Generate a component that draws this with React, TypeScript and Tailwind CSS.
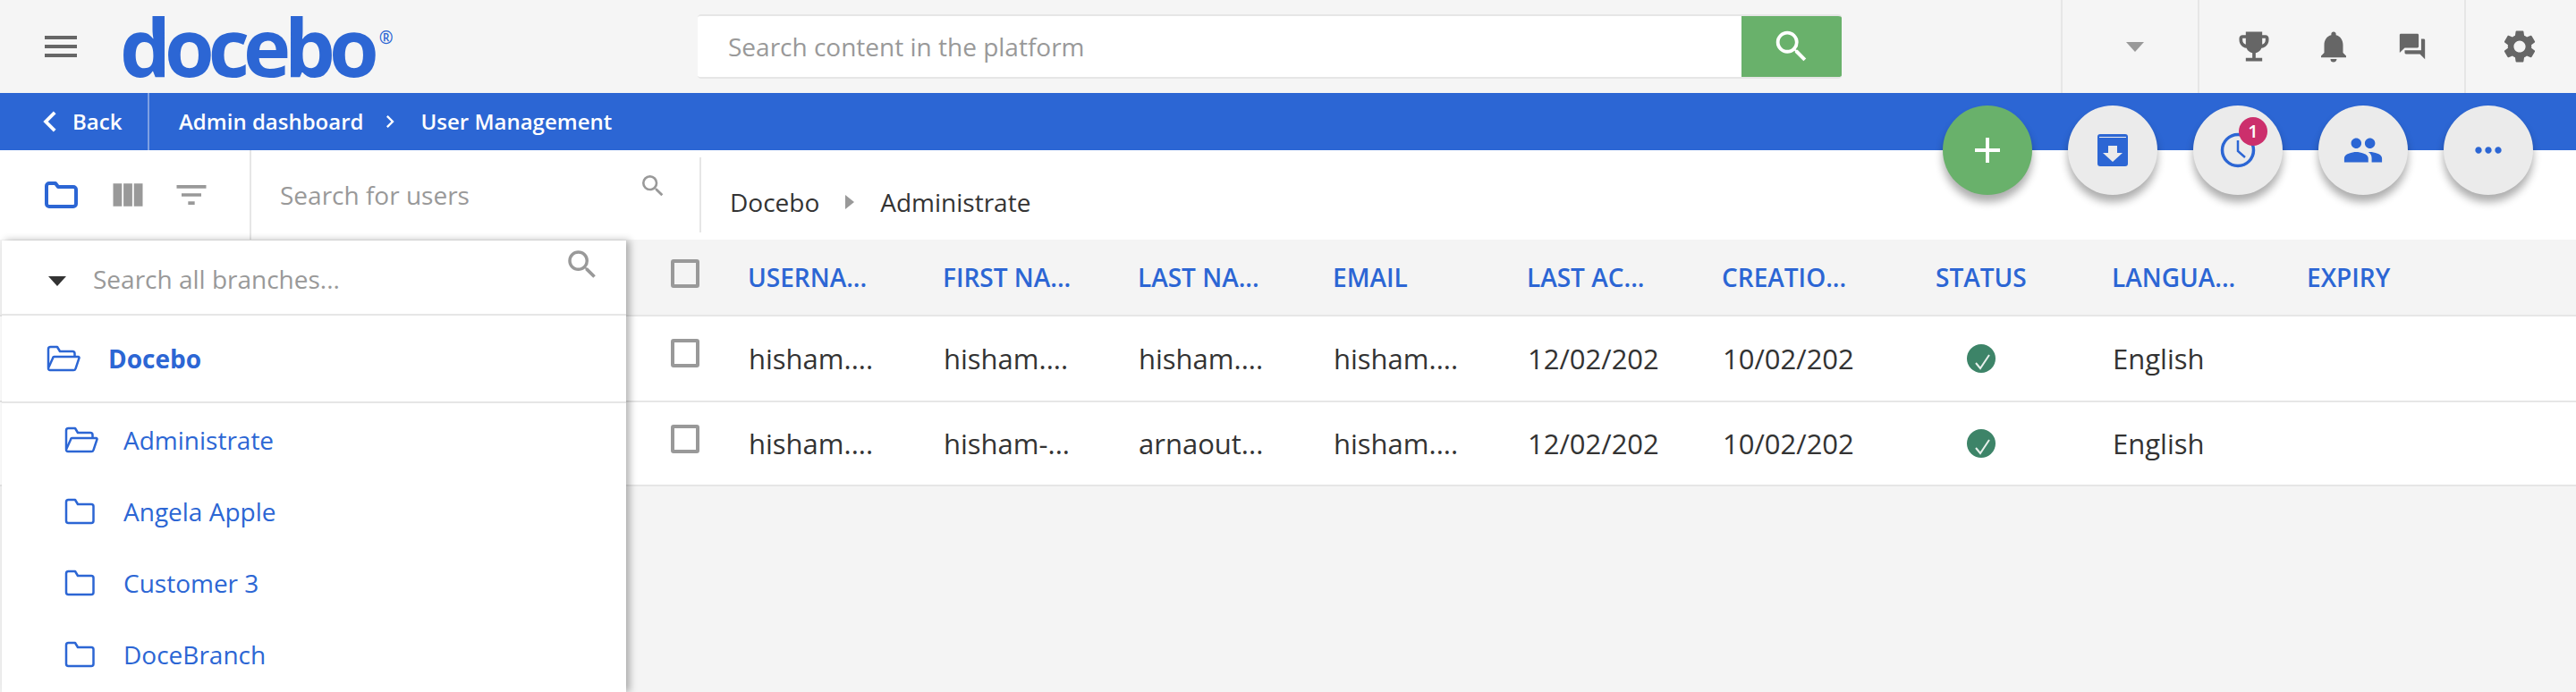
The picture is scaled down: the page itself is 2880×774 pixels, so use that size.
import {
  MdMenu,
  MdSearch,
  MdChevronLeft,
  MdChevronRight,
  MdViewColumn,
  MdFilterList,
  MdEmojiEvents,
  MdNotifications,
  MdForum,
  MdSettings,
  MdPeople,
  MdMoreHoriz,
  MdAdd,
} from "react-icons/md";

const columns = ["USERNA...", "FIRST NA...", "LAST NA...", "EMAIL", "LAST AC...", "CREATIO...", "STATUS", "LANGUA...", "EXPIRY"];

const rows = [
  ["hisham....", "hisham....", "hisham....", "hisham...."],
  ["hisham....", "hisham-...", "arnaout...", "hisham...."],
];

const gridCols = "grid grid-cols-[218px_218px_218px_217px_218px_239px_197px_218px_218px] items-center";

function FolderClosed({ className }: { className?: string }) {
  return (
    <svg viewBox="0 0 34 30" fill="none" stroke="currentColor" strokeWidth="2.5" strokeLinejoin="round" className={className}>
      <path d="M2 4.5a2.5 2.5 0 0 1 2.5-2.5H12l3 5h15a2.5 2.5 0 0 1 2.5 2.5v16a2.5 2.5 0 0 1-2.5 2.5H4.5A2.5 2.5 0 0 1 2 25.5z" />
    </svg>
  );
}

function FolderOpen({ className }: { className?: string }) {
  return (
    <svg viewBox="0 0 38 30" fill="none" stroke="currentColor" strokeWidth="2.5" strokeLinejoin="round" className={className}>
      <path d="M2 25V4.5A2.5 2.5 0 0 1 4.5 2H12l3 5h14a2.5 2.5 0 0 1 2.5 2.5V13" />
      <path d="M9 13h26.5a1 1 0 0 1 1 1.3l-4 12a2.5 2.5 0 0 1-2.4 1.7H4a2 2 0 0 1-1.9-2.6l5-11a1.5 1.5 0 0 1 1.9-1.4z" />
    </svg>
  );
}

function RoundButton({ children, green }: { children: React.ReactNode; green?: boolean }) {
  return (
    <div
      className={`relative flex h-[100px] w-[100px] items-center justify-center rounded-full shadow-[0_8px_10px_rgba(0,0,0,0.32)] ${
        green ? "bg-[#69b16b]" : "bg-[#ebebeb]"
      }`}
    >
      {children}
    </div>
  );
}

export default function App() {
  return (
    <div className="relative flex h-[774px] w-[2880px] flex-col overflow-hidden bg-[#f4f4f4] font-['Open_Sans',sans-serif] text-[31px] text-[#333333]">
      {/* top bar */}
      <header className="flex h-[104px] shrink-0 items-center bg-[#f5f5f5]">
        <MdMenu className="ml-[44px] h-[48px] w-[48px] text-[#666666]" />
        <div className="ml-[42px] flex h-full w-[306px] items-start text-[#2c66d4]">
          <span className="mt-[1px] text-[90px] leading-[100px] font-bold tracking-[-7px]">docebo</span>
          <span className="mt-[33px] ml-[7px] text-[19px] leading-none font-semibold">®</span>
        </div>
        <div className="ml-[340px] flex h-[72px] w-[1279px] overflow-hidden rounded-[4px] border-t-2 border-b-2 border-[#e6e6e6]">
          <div className="flex flex-1 items-center bg-white pl-[34px] text-[28px] text-[#999999]">Search content in the platform</div>
          <div className="my-[-2px] flex w-[112px] items-center justify-center bg-[#69b16b]">
            <MdSearch className="h-[46px] w-[46px] text-white" />
          </div>
        </div>
        <div className="ml-[245px] flex h-full w-[153px] items-center justify-center border-l-2 border-[#e6e6e6] pl-[10px]">
          <div className="h-0 w-0 border-x-[10px] border-t-[11px] border-x-transparent border-t-[#999999]" />
        </div>
        <div className="flex h-full w-[298px] items-center border-l-2 border-[#e6e6e6] pl-[39px] text-[#666666]">
          <MdEmojiEvents className="h-[44px] w-[44px]" />
          <MdNotifications className="ml-[46px] h-[42px] w-[42px]" />
          <MdForum className="ml-[50px] h-[34px] w-[34px]" />
        </div>
        <div className="flex h-full flex-1 items-center border-l-2 border-[#e6e6e6] pl-[38px] text-[#666666]">
          <MdSettings className="h-[44px] w-[44px]" />
        </div>
      </header>

      {/* blue navigation bar */}
      <nav className="flex h-[64px] shrink-0 items-center bg-[#2c66d4] text-[24px] font-semibold text-white">
        <div className="flex h-full w-[167px] items-center border-r-2 border-[#7ea0e2] pl-[33px]">
          <MdChevronLeft className="h-[46px] w-[46px]" />
          <span className="ml-[2px]">Back</span>
        </div>
        <span className="ml-[33px]">Admin dashboard</span>
        <MdChevronRight className="mr-[20px] ml-[16px] h-[28px] w-[28px]" />
        <span>User Management</span>
      </nav>

      {/* toolbar */}
      <div className="flex h-[100px] shrink-0 items-center bg-white">
        <div className="flex h-full w-[281px] items-center border-r-2 border-[#e6e6e6] pl-[50px]">
          <svg viewBox="0 0 37 30" className="h-[30px] w-[37px] text-[#2c66d4]" fill="none" stroke="currentColor" strokeWidth="4" strokeLinejoin="round">
            <path d="M2 5a3 3 0 0 1 3-3h7l3 4h17a3 3 0 0 1 3 3v16a3 3 0 0 1-3 3H5a3 3 0 0 1-3-3z" />
          </svg>
          <MdViewColumn className="ml-[34px] h-[44px] w-[44px] text-[#999999]" />
          <MdFilterList className="ml-[27px] h-[44px] w-[44px] text-[#999999]" />
        </div>
        <div className="flex w-[501px] items-center pr-[36px] pl-[32px] text-[28px] text-[#999999]">
          <span className="flex-1">Search for users</span>
          <MdSearch className="mt-[-20px] h-[32px] w-[32px]" />
        </div>
        <div className="flex h-[84px] items-center border-l-2 border-[#e6e6e6] pt-[16px] pl-[32px] text-[28px]">
          <span>Docebo</span>
          <div className="mx-[29px] h-0 w-0 border-y-[8px] border-l-[10px] border-y-transparent border-l-[#999999]" />
          <span>Administrate</span>
        </div>
      </div>

      {/* users table */}
      <div className={`${gridCols} h-[84px] shrink-0 pl-[836px] text-[28px] font-semibold text-[#2c66d4]`}>
        {columns.map((col) => (
          <span key={col}>{col}</span>
        ))}
      </div>
      {rows.map((row, i) => (
        <div key={i} className={`${gridCols} h-[96px] shrink-0 border-t-2 border-[#e6e6e6] bg-white pl-[837px] ${i === 1 ? "border-b-2" : ""}`}>
          {row.map((cell, j) => (
            <span key={j}>{cell}</span>
          ))}
          <span>12/02/202</span>
          <span>10/02/202</span>
          <span className="flex h-[32px] w-[32px] translate-x-[34px] items-center justify-center rounded-full bg-[#3d8468]">
            <svg viewBox="0 0 32 32" className="h-[32px] w-[32px]" fill="none" stroke="#e8f0ec" strokeWidth="2">
              <path d="M10 21l5 6 10-15" />
            </svg>
          </span>
          <span>English</span>
          <span />
        </div>
      ))}

      {/* table checkboxes */}
      {[290, 379, 475].map((top) => (
        <div key={top} style={{ top }} className="absolute left-[750px] h-[32px] w-[32px] rounded-[3px] border-4 border-[#999999]" />
      ))}

      {/* branch panel */}
      <aside className="absolute top-[269px] bottom-0 left-[2px] w-[698px] bg-white shadow-[4px_0_8px_rgba(0,0,0,0.3)]">
        <div className="flex h-[84px] border-b-2 border-[#e6e6e6] pr-[28px] pl-[52px] text-[28px] text-[#999999]">
          <div className="mt-[40px] h-0 w-0 border-x-[10px] border-t-[11px] border-x-transparent border-t-[#333333]" />
          <span className="mt-[22px] ml-[30px] flex-1">Search all branches...</span>
          <MdSearch className="mt-[6px] h-[42px] w-[42px]" />
        </div>
        <div className="flex h-[98px] items-center border-b-2 border-[#e6e6e6] pl-[50px] text-[28px] font-bold text-[#2c66d4]">
          <FolderOpen className="h-[30px] w-[38px]" />
          <span className="ml-[31px]">Docebo</span>
        </div>
        <div className="mt-[1px] flex h-[80px] items-center pl-[70px] text-[#2c66d4]">
          <FolderOpen className="h-[30px] w-[38px]" />
          <span className="ml-[28px] text-[28px]">Administrate</span>
        </div>
        {["Angela Apple", "Customer 3", "DoceBranch"].map((name) => (
          <div key={name} className="flex h-[80px] items-center pl-[70px] text-[#2c66d4]">
            <FolderClosed className="h-[30px] w-[34px]" />
            <span className="ml-[32px] text-[28px]">{name}</span>
          </div>
        ))}
      </aside>

      {/* floating actions */}
      <div className="absolute top-[118px] left-[2172px] flex gap-[40px]">
        <RoundButton green>
          <MdAdd className="h-[48px] w-[48px] text-white" />
        </RoundButton>
        <RoundButton>
          <svg viewBox="0 0 34 36" className="h-[36px] w-[34px]">
            <path fill="#2c66d4" d="M3 0h28a3 3 0 0 1 3 3v30a3 3 0 0 1-3 3H3a3 3 0 0 1-3-3V3a3 3 0 0 1 3-3z" />
            <path fill="#ebebeb" d="M2 3h30v1H2z" />
            <path fill="#ebebeb" d="M12 13h10v8h6L17 31 6 21h6z" />
          </svg>
        </RoundButton>
        <RoundButton>
          <svg viewBox="0 0 40 40" className="h-[40px] w-[40px]" fill="none" stroke="#2c66d4" strokeWidth="3.5">
            <circle cx="20" cy="20" r="17.5" />
            <path strokeWidth="2.5" d="M20 9v12l8 7" />
          </svg>
          <span className="absolute top-[13px] left-[51px] flex h-[32px] w-[32px] items-center justify-center rounded-full bg-[#cc2f6c] text-[20px] font-semibold text-white">1</span>
        </RoundButton>
        <RoundButton>
          <MdPeople className="h-[46px] w-[46px] text-[#2c66d4]" />
        </RoundButton>
        <RoundButton>
          <MdMoreHoriz className="h-[44px] w-[44px] text-[#2c66d4]" />
        </RoundButton>
      </div>
    </div>
  );
}
